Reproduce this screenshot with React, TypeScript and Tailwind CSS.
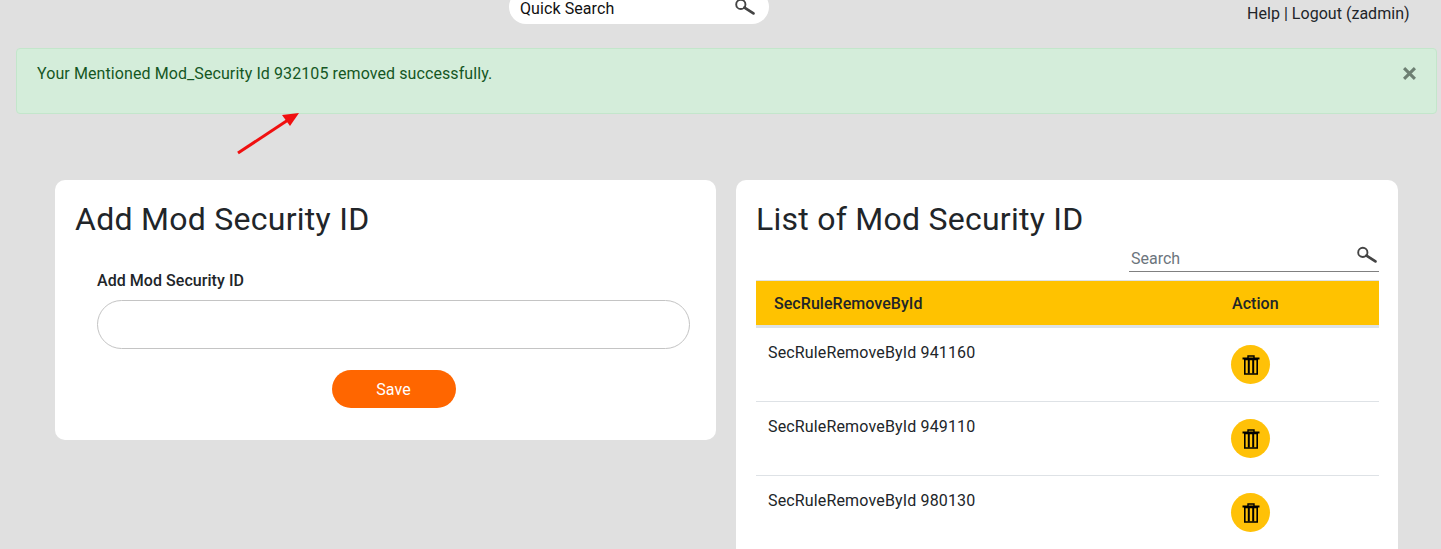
import React from "react";

function SearchIcon({ className }: { className?: string }) {
  return (
    <svg viewBox="0 0 20 16" className={className} fill="none" stroke="#444" >
      <circle cx="6.5" cy="6" r="4.4" strokeWidth="1.8" />
      <path d="M10 9 L18.5 14.6" strokeWidth="2.6" strokeLinecap="round" />
    </svg>
  );
}

function TrashIcon() {
  return (
    <svg viewBox="0 0 18 20" className="w-[18px] h-[20px]" fill="none" stroke="#000">
      <path d="M6 3.5V1h6v2.5" strokeWidth="1.4" />
      <path d="M0.5 3.5H17.5" strokeWidth="2" />
      <path d="M2.8 4.5H15.2V19H2.8Z" strokeWidth="1.6" />
      <path d="M6.8 5V18.5M11.2 5V18.5" strokeWidth="2" />
    </svg>
  );
}

const rows = ["941160", "949110", "980130"];

export default function App() {
  return (
    <div className="relative h-[549px] overflow-hidden bg-[#e0e0e0] font-['Roboto',sans-serif] text-[#212529]">
      <header className="flex h-[48px] items-start">
        <div className="ml-[509px] mt-[-10px] flex h-[34px] w-[260px] items-center justify-between rounded-[17px] bg-white pl-[11px] pr-[14px] pt-[3px]">
          <span className="text-[16px] leading-[24px] tracking-[0.08px] text-[#111]">Quick Search</span>
          <SearchIcon className="w-[21px] h-[17px] mt-[-4px]" />
        </div>
        <div className="ml-[478px] mt-[2px] whitespace-nowrap text-[16px] leading-[24px] tracking-[0.03px] text-[#212529]">
          Help | Logout (zadmin)
        </div>
      </header>

      <div className="ml-[16px] flex h-[66px] w-[1421px] items-start justify-between rounded-[4px] border border-[#c3e6cb] bg-[#d4edda] pl-[20px] pr-[20px] pt-[13px] text-[#155724]">
        <span className="text-[16px] leading-[24px] tracking-[0.09px]">
          Your Mentioned Mod_Security Id 932105 removed successfully.
        </span>
        <svg viewBox="0 0 12 12" className="mt-[5px] h-[13px] w-[13px]" fill="none" stroke="#6d7f72" strokeWidth="2.8">
          <path d="M1 1L11 11M11 1L1 11" />
        </svg>
      </div>

      <svg className="absolute left-[232px] top-[108px] h-[50px] w-[70px]" viewBox="0 0 70 50" fill="none">
        <path d="M6 45L56 12" stroke="#f01010" strokeWidth="3" />
        <path d="M67 5L50 7L58 18Z" fill="#f01010" />
      </svg>

      <main className="ml-[55px] mt-[66px] flex w-[1343px] items-start gap-[20px]">
        <section className="h-[260px] w-[661px] rounded-[10px] bg-white pl-[20px] pt-[19px]">
          <h2 className="text-[32px] font-normal leading-[40px] tracking-[0.27px] text-[#212529]">Add Mod Security ID</h2>
          <label className="ml-[22px] mt-[30px] block text-[16px] font-medium leading-[24px] tracking-[0.05px] text-[#212529]">
            Add Mod Security ID
          </label>
          <div className="ml-[22px] mt-[7px] h-[49px] w-[593px] rounded-[25px] border border-[#c4c4c4] bg-white" />
          <div className="ml-[22px] mt-[21px] flex w-[593px] justify-center">
            <button className="h-[38px] w-[124px] rounded-[19px] bg-[#ff6600] pt-[1px] text-[16px] font-normal tracking-[0.1px] text-white">
              Save
            </button>
          </div>
        </section>

        <section className="h-[400px] w-[662px] rounded-[10px] bg-white pl-[20px] pr-[19px] pt-[19px]">
          <h2 className="text-[32px] font-normal leading-[40px] tracking-[0.25px] text-[#212529]">List of Mod Security ID</h2>
          <div className="ml-auto mt-[7px] flex h-[26px] w-[250px] items-start justify-between border-b border-[#808080] pl-[2px] pr-[2px]">
            <span className="pt-[1px] text-[16px] leading-[24px] text-[#6c757d]">Search</span>
            <SearchIcon className="w-[21px] h-[17px]" />
          </div>
          <div className="mt-[8px] flex h-[45px] items-center border-t border-[#dee2e6] bg-[#ffc200] pt-[1px] text-[16px] font-medium tracking-[0.05px] text-[#212529]">
            <span className="ml-[18px] w-[458px]">SecRuleRemoveById</span>
            <span>Action</span>
          </div>
          <div className="h-[3px] bg-[#dee2e6]" />
          {rows.map((id) => (
            <div key={id} className="flex h-[74px] items-start border-b border-[#dee2e6] pl-[12px]">
              <span className="mt-[13px] w-[463px] text-[16px] leading-[24px] tracking-[0.15px] text-[#212529]">
                SecRuleRemoveById {id}
              </span>
              <span className="mt-[17px] flex h-[39px] w-[39px] items-center justify-center rounded-full bg-[#ffc107]">
                <TrashIcon />
              </span>
            </div>
          ))}
        </section>
      </main>
    </div>
  );
}
